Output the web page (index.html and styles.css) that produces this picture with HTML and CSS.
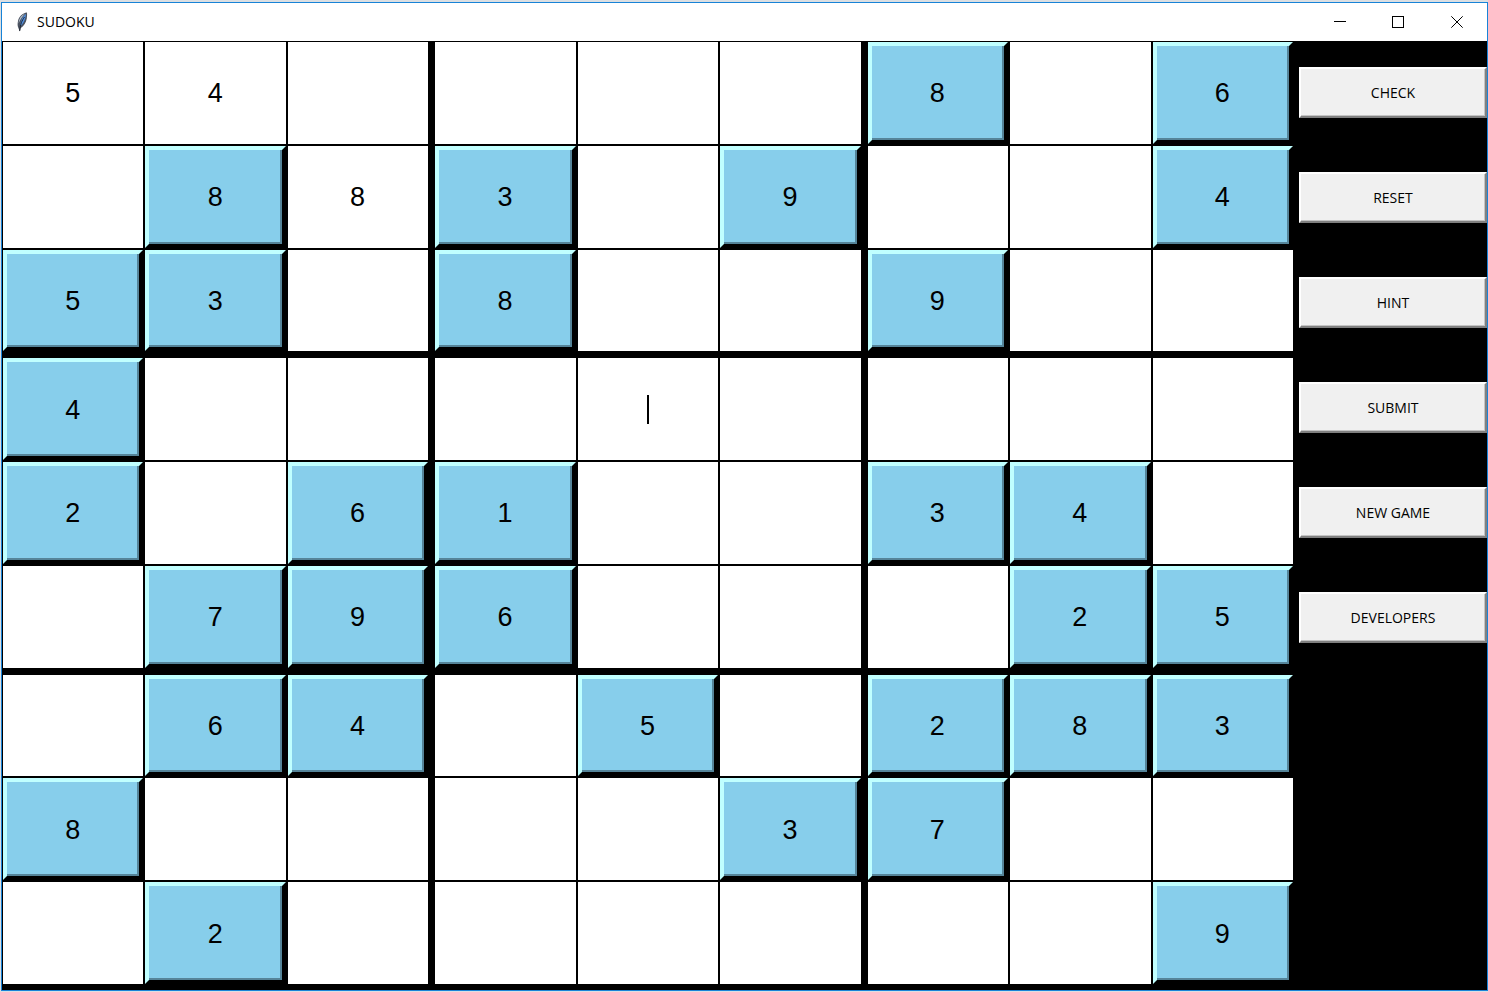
FILE: index.html
```html
<!DOCTYPE html>
<html lang="en">
<head>
<meta charset="utf-8">
<meta name="viewport" content="width=device-width, initial-scale=1">
<title>SUDOKU</title>
<link rel="stylesheet" href="styles.css">
</head>
<body>
<div class="window">
  <header class="titlebar">
    <svg class="feather" viewBox="0 0 12 20" aria-hidden="true">
      <path d="M11 .5C6.500 1 3 4.500 2 9C1.400 12 1.500 14 2.200 15.500L3.700 19.500L4.800 16C8 14 10 10.500 10.800 6.500Q11.300 3 11 .5Z" fill="#4a5260"/>
      <path d="M10 2C7 4 4.600 8 4 14.500C7 12.500 9.600 7.500 10 2Z" fill="#4f8fe0"/>
      <path d="M9 1.800C5 3.500 3 6.500 2.600 11.500C4.300 7.500 6.500 4 9 1.800Z" fill="#b4bec8"/>
      <path d="M8.500 5C6 8.500 4.300 12 3.700 19" fill="none" stroke="#151b25" stroke-width=".9"/>
    </svg>
    <h1 class="title">SUDOKU</h1>
    <div class="controls">
      <button class="control" type="button" aria-label="Minimize"><svg class="glyph" viewBox="0 0 12 12"><path d="M0 5.500H12"/></svg></button>
      <button class="control" type="button" aria-label="Maximize"><svg class="glyph" viewBox="0 0 12 12"><path d="M.5.5H11.500V11.500H.5Z"/></svg></button>
      <button class="control" type="button" aria-label="Close"><svg class="glyph smooth" viewBox="0 0 12 12"><path d="M.3.3L11.700 11.700M11.700.3L.3 11.700"/></svg></button>
    </div>
  </header>
  <main class="game">
    <div class="board">
      <div class="block">
        <input class="cell" aria-label="Row 1 column 1" value="5"><input class="cell" aria-label="Row 1 column 2" value="4"><input class="cell" aria-label="Row 1 column 3">
        <input class="cell" aria-label="Row 2 column 1"><button class="cell given" type="button">8</button><input class="cell" aria-label="Row 2 column 3" value="8">
        <button class="cell given" type="button">5</button><button class="cell given" type="button">3</button><input class="cell" aria-label="Row 3 column 3">
      </div>
      <div class="block">
        <input class="cell" aria-label="Row 1 column 4"><input class="cell" aria-label="Row 1 column 5"><input class="cell" aria-label="Row 1 column 6">
        <button class="cell given" type="button">3</button><input class="cell" aria-label="Row 2 column 5"><button class="cell given" type="button">9</button>
        <button class="cell given" type="button">8</button><input class="cell" aria-label="Row 3 column 5"><input class="cell" aria-label="Row 3 column 6">
      </div>
      <div class="block">
        <button class="cell given" type="button">8</button><input class="cell" aria-label="Row 1 column 8"><button class="cell given" type="button">6</button>
        <input class="cell" aria-label="Row 2 column 7"><input class="cell" aria-label="Row 2 column 8"><button class="cell given" type="button">4</button>
        <button class="cell given" type="button">9</button><input class="cell" aria-label="Row 3 column 8"><input class="cell" aria-label="Row 3 column 9">
      </div>
      <div class="block">
        <button class="cell given" type="button">4</button><input class="cell" aria-label="Row 4 column 2"><input class="cell" aria-label="Row 4 column 3">
        <button class="cell given" type="button">2</button><input class="cell" aria-label="Row 5 column 2"><button class="cell given" type="button">6</button>
        <input class="cell" aria-label="Row 6 column 1"><button class="cell given" type="button">7</button><button class="cell given" type="button">9</button>
      </div>
      <div class="block">
        <input class="cell" aria-label="Row 4 column 4"><div class="active"><input class="cell" aria-label="Row 4 column 5"></div><input class="cell" aria-label="Row 4 column 6">
        <button class="cell given" type="button">1</button><input class="cell" aria-label="Row 5 column 5"><input class="cell" aria-label="Row 5 column 6">
        <button class="cell given" type="button">6</button><input class="cell" aria-label="Row 6 column 5"><input class="cell" aria-label="Row 6 column 6">
      </div>
      <div class="block">
        <input class="cell" aria-label="Row 4 column 7"><input class="cell" aria-label="Row 4 column 8"><input class="cell" aria-label="Row 4 column 9">
        <button class="cell given" type="button">3</button><button class="cell given" type="button">4</button><input class="cell" aria-label="Row 5 column 9">
        <input class="cell" aria-label="Row 6 column 7"><button class="cell given" type="button">2</button><button class="cell given" type="button">5</button>
      </div>
      <div class="block">
        <input class="cell" aria-label="Row 7 column 1"><button class="cell given" type="button">6</button><button class="cell given" type="button">4</button>
        <button class="cell given" type="button">8</button><input class="cell" aria-label="Row 8 column 2"><input class="cell" aria-label="Row 8 column 3">
        <input class="cell" aria-label="Row 9 column 1"><button class="cell given" type="button">2</button><input class="cell" aria-label="Row 9 column 3">
      </div>
      <div class="block">
        <input class="cell" aria-label="Row 7 column 4"><button class="cell given" type="button">5</button><input class="cell" aria-label="Row 7 column 6">
        <input class="cell" aria-label="Row 8 column 4"><input class="cell" aria-label="Row 8 column 5"><button class="cell given" type="button">3</button>
        <input class="cell" aria-label="Row 9 column 4"><input class="cell" aria-label="Row 9 column 5"><input class="cell" aria-label="Row 9 column 6">
      </div>
      <div class="block">
        <button class="cell given" type="button">2</button><button class="cell given" type="button">8</button><button class="cell given" type="button">3</button>
        <button class="cell given" type="button">7</button><input class="cell" aria-label="Row 8 column 8"><input class="cell" aria-label="Row 8 column 9">
        <input class="cell" aria-label="Row 9 column 7"><input class="cell" aria-label="Row 9 column 8"><button class="cell given" type="button">9</button>
      </div>
    </div>
    <nav class="actions" aria-label="Game actions">
      <button class="action" type="button">CHECK</button>
      <button class="action" type="button">RESET</button>
      <button class="action" type="button">HINT</button>
      <button class="action" type="button">SUBMIT</button>
      <button class="action" type="button">NEW GAME</button>
      <button class="action" type="button">DEVELOPERS</button>
    </nav>
  </main>
</div>
</body>
</html>
```
FILE: styles.css
```css
* { box-sizing: border-box; }

body {
  margin: 0;
  min-height: 100vh;
  display: flex;
  padding: 2px 0 1px 1px;
  background: #dcdfe2;
  font-family: "Open Sans", "Noto Sans", sans-serif;
}

.window {
  flex: 1;
  display: flex;
  flex-direction: column;
  border: 1px solid #1883d7;
  background: #fff;
}

.titlebar {
  display: flex;
  align-items: center;
  height: 38px;
  padding-left: 14px;
}

.feather { width: 12px; height: 20px; }

.title {
  margin: 0 0 0 9px;
  font-size: 14px;
  line-height: 20px;
  font-weight: 400;
  color: #000;
}

.controls { display: flex; margin-left: auto; }

.control {
  display: flex;
  align-items: center;
  justify-content: center;
  width: 58px;
  height: 38px;
  padding: 0;
  border: 0;
  background: none;
}

.control:last-child { width: 60px; }

.glyph {
  width: 12px;
  height: 12px;
  fill: none;
  stroke: #000;
  stroke-width: 1;
  shape-rendering: crispEdges;
}

.smooth { shape-rendering: auto; }

.game {
  flex: 1;
  display: flex;
  gap: 6px;
  padding: 1px 0 6px 1px;
  background: #000;
}

.board {
  flex: 1;
  display: grid;
  grid-template: repeat(3, 1fr) / repeat(3, 1fr);
  gap: 7px;
}

.block {
  display: grid;
  grid-template: repeat(3, 1fr) / repeat(3, 1fr);
  gap: 2px;
}

.cell {
  width: 100%;
  height: 100%;
  min-width: 0;
  padding: 2px 1px 0 0;
  border: 0;
  border-radius: 0;
  background: #fff;
  color: #000;
  font: 27px/32px "Liberation Sans", Arial, sans-serif;
  text-align: center;
}

.given {
  padding: 1px 1px 0 0;
  border: 4px solid;
  border-color: #c0ffff #000 #000 #c0ffff;
  background: #87ceeb;
  box-shadow: inset -2px -2px #558499;
}

.active { position: relative; }

.active::after {
  content: "";
  position: absolute;
  inset: 0;
  width: 2px;
  height: 29px;
  margin: auto;
  background: #000;
}

.actions {
  display: flex;
  flex-direction: column;
  gap: 54px;
  width: 188px;
  padding-top: 25px;
}

.action {
  height: 51px;
  padding: 0;
  border: 2px solid;
  border-color: #fff #808080 #808080 #fff;
  background: #f0f0f0;
  box-shadow: inset -1px -1px #c4c4c4;
  color: #000;
  font: 14px/20px "Open Sans", "Noto Sans", sans-serif;
}
```
